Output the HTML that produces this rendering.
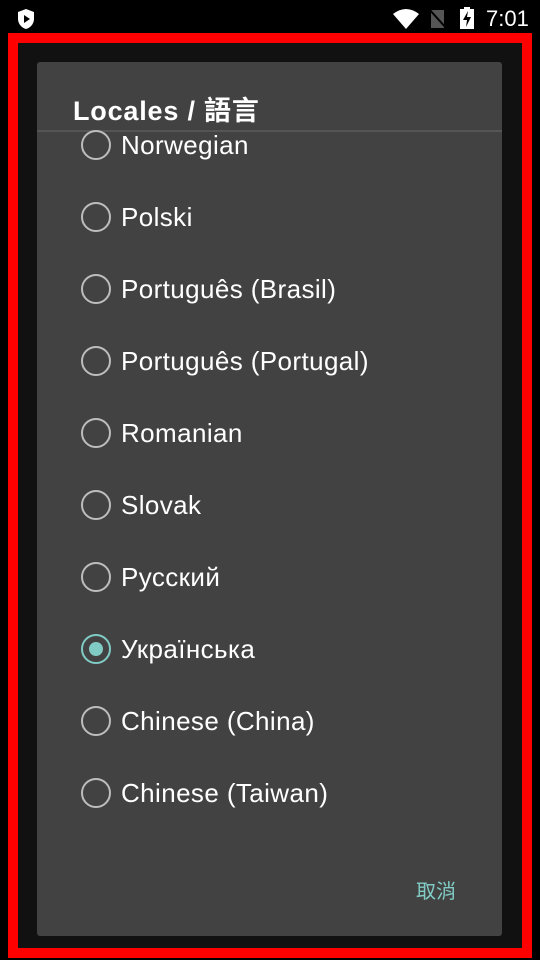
<!DOCTYPE html><html><head><meta charset="utf-8"><style>
*{margin:0;padding:0;box-sizing:border-box}
body{width:540px;height:960px;background:#000;position:relative;overflow:hidden;font-family:"Liberation Sans","Noto Sans CJK TC",sans-serif}
.sb{position:absolute;left:0;top:0;width:540px;height:33px;background:#000;color:#fff}
.red{position:absolute;left:8px;top:33px;width:524px;height:925px;border:10px solid #f00;background:#111}
.dlg{position:absolute;left:37px;top:62px;width:465px;height:874px;background:#424242;border-radius:3px}
.title{position:absolute;left:36px;top:27px;font-size:27px;color:#fff;letter-spacing:0.8px;font-weight:bold}
.div{position:absolute;left:0;top:68px;width:465px;height:2px;background:#555}
.row{position:absolute;left:44px;height:30px;display:flex;align-items:center}
.rad{width:30px;height:30px;border:2.5px solid #bdbdbd;border-radius:50%;margin-right:10px;position:relative;flex:none}
.rad.on{border-color:#80cbc4}
.rad.on:after{content:"";position:absolute;left:5.5px;top:5.5px;width:14px;height:14px;border-radius:50%;background:#80cbc4}
.row span{color:#fff;font-size:26px;letter-spacing:0.4px}
.cancel{position:absolute;left:379px;top:813px;color:#80cbc4;font-size:20px}
</style></head><body>
<div class="sb">
<svg style="position:absolute;left:16px;top:8px" width="20" height="22" viewBox="0 0 20 22"><path d="M10 1L2 4v7c0 5 4 9 8 10 4-1 8-5 8-10V4z" fill="#fff"/><path d="M8 7v8l6-4z" fill="#000"/></svg>
<svg style="position:absolute;left:393px;top:9px" width="26" height="20" viewBox="0 0 26 20"><path d="M0 5Q13-5 26 5L13 20z" fill="#fff"/></svg>
<svg style="position:absolute;left:428px;top:8px" width="20" height="22" viewBox="0 0 20 22"><rect x="3" y="2" width="13" height="18" fill="#555"/><path d="M1 1L19 21" stroke="#000" stroke-width="2"/></svg>
<svg style="position:absolute;left:459px;top:7px" width="16" height="22" viewBox="0 0 16 22"><rect x="5" y="0" width="6" height="3" fill="#fff"/><rect x="1" y="2" width="14" height="20" fill="#fff"/><path d="M9 4L4 13h4l-1 7 5-10H8z" fill="#000"/></svg>
<div style="position:absolute;left:486px;top:6px;font-size:22px">7:01</div>
</div>
<div class="red"></div>
<div class="dlg">
<div class="title">Locales / 語言</div>
<div class="div"></div>
<div class="row" style="top:68px"><div class="rad"></div><span>Norwegian</span></div>
<div class="row" style="top:140px"><div class="rad"></div><span>Polski</span></div>
<div class="row" style="top:212px"><div class="rad"></div><span>Português (Brasil)</span></div>
<div class="row" style="top:284px"><div class="rad"></div><span>Português (Portugal)</span></div>
<div class="row" style="top:356px"><div class="rad"></div><span>Romanian</span></div>
<div class="row" style="top:428px"><div class="rad"></div><span>Slovak</span></div>
<div class="row" style="top:500px"><div class="rad"></div><span>Русский</span></div>
<div class="row" style="top:572px"><div class="rad on"></div><span>Українська</span></div>
<div class="row" style="top:644px"><div class="rad"></div><span>Chinese (China)</span></div>
<div class="row" style="top:716px"><div class="rad"></div><span>Chinese (Taiwan)</span></div>
<div class="cancel">取消</div>
</div>
</body></html>
